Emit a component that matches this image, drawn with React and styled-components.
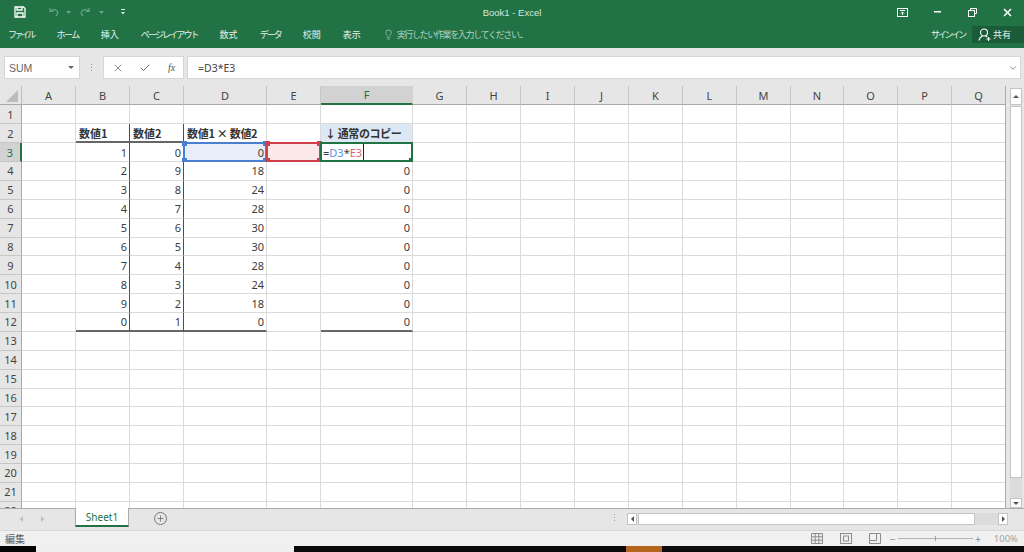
import React from 'react';
import styled, { createGlobalStyle } from 'styled-components';
import { Lightbulb, X, Check, ChevronDown, Plus } from 'lucide-react';

const GlobalStyle = createGlobalStyle`
  html, body { margin: 0; padding: 0; overflow: hidden; }
  body { font-family: "Noto Sans CJK JP", "Noto Sans", sans-serif; }
  * { box-sizing: border-box; }
`;

const Page = styled.div`
  width: 1024px;
  height: 552px;
  display: flex;
  flex-direction: column;
  background: #e6e6e6;
  overflow: hidden;
`;

const TitleBar = styled.div`
  height: 24px;
  background: #217346;
  color: #e4efe8;
  display: grid;
  grid-template-columns: 1fr auto 1fr;
  align-items: center;
`;

const Qat = styled.div`
  display: grid;
  grid-template-columns: 34px 18px 14px 19px 21px auto;
  align-items: center;
  justify-content: start;
  padding-left: 14px;
`;

const WindowTitle = styled.div`
  font-family: "Liberation Sans", sans-serif;
  font-size: 9.5px;
  color: #d6e6dc;
`;

const WindowButtons = styled.div`
  display: flex;
  justify-content: flex-end;
  align-items: center;
  gap: 26.500px;
  padding-right: 12px;
`;

const RibbonTabs = styled.div`
  height: 24px;
  background: #217346;
  display: flex;
  align-items: center;
  padding: 0 0 4px 8px;
  gap: 22px;
  color: #e8f1eb;
  font-size: 9px;
`;

const RibbonTab = styled.span`
  white-space: nowrap;
  letter-spacing: ${p => p.$tight}px;
`;

const FileTab = styled(RibbonTab)`
  margin-right: 1px;
`;

const TellMe = styled.div`
  display: flex;
  align-items: center;
  gap: 3px;
  color: #b4d0bf;
  letter-spacing: -1.35px;
  white-space: nowrap;
`;

const AccountArea = styled.div`
  margin-left: auto;
  display: flex;
  align-items: center;
  gap: 7px;
`;

const SignIn = styled.span`
  letter-spacing: -2.2px;
`;

const ShareButton = styled.div`
  width: 52px;
  height: 17px;
  padding-left: 6px;
  background: #1a5c38;
  display: flex;
  align-items: center;
  gap: 2px;
`;

const FormulaArea = styled.div`
  height: 38px;
  background: #e6e6e6;
  display: flex;
  align-items: flex-start;
  padding: 8px 3px 0 4px;
`;

const NameBox = styled.div`
  width: 76px;
  height: 23px;
  background: #fff;
  border: 1px solid #d6d6d6;
  display: flex;
  align-items: center;
  justify-content: space-between;
  padding: 0 3px 0 4px;
  font-family: "Liberation Sans", sans-serif;
  font-size: 10.5px;
  color: #666;
`;

const Caret = styled.span`
  width: 0;
  height: 0;
  border-left: 3px solid transparent;
  border-right: 3px solid transparent;
  border-top: 3px solid #666;
  margin-right: 2px;
`;

const Grip = styled.div`
  width: 23px;
  height: 22px;
  display: flex;
  flex-direction: column;
  align-items: center;
  justify-content: center;
  gap: 2px;
`;

const GripDot = styled.span`
  width: 1px;
  height: 1px;
  background: #9a9a9a;
`;

const FormulaButtons = styled.div`
  width: 81px;
  height: 23px;
  background: #fff;
  border: 1px solid #d6d6d6;
  display: grid;
  grid-template-columns: repeat(3, 27px);
  justify-items: center;
  align-items: center;
  color: #666;
`;

const FxLabel = styled.span`
  font-family: "Liberation Serif", serif;
  font-style: italic;
  font-size: 10px;
  color: #555;
`;

const FormulaInput = styled.div`
  flex: 1;
  height: 23px;
  margin-left: 3px;
  background: #fff;
  border: 1px solid #d6d6d6;
  display: flex;
  align-items: center;
  justify-content: space-between;
  padding: 0 2px 0 10px;
  font-family: "Noto Sans", sans-serif;
  font-size: 10.5px;
  color: #444;
`;

const SheetArea = styled.div`
  height: 422px;
  display: flex;
  background: #e6e6e6;
`;

const Grid = styled.div`
  width: 1006px;
  height: 422px;
  overflow: hidden;
  display: grid;
  grid-template-columns: 22px 54px 54px 54px 83px 54px 92px repeat(7, 54px) 53px 54px 54px 54px;
  grid-template-rows: 19.400px repeat(22, 18.880px);
  background: #fff;
  border-right: 1px solid #ababab;
`;

const Corner = styled.div`
  background: #e6e6e6;
  border-right: 1px solid #bdbdbd;
  border-bottom: 1px solid #a8a8a8;
  position: relative;
  &::after {
    content: '';
    position: absolute;
    right: 3px;
    bottom: 2px;
    border-left: 12px solid transparent;
    border-bottom: 12px solid #bcbcbc;
  }
`;

const ColHead = styled.div`
  background: ${p => (p.$active ? '#d2d2d2' : '#e6e6e6')};
  border-right: 1px solid ${p => (p.$active ? '#d2d2d2' : '#c6c6c6')};
  border-bottom: ${p => (p.$active ? '2px solid #217346' : '1px solid #a8a8a8')};
  display: flex;
  align-items: center;
  justify-content: center;
  font-family: "Noto Sans", sans-serif;
  font-size: 11px;
  color: ${p => (p.$active ? '#217346' : '#444')};
`;

const RowHead = styled.div`
  background: ${p => (p.$active ? '#d2d2d2' : '#e6e6e6')};
  border-right: ${p => (p.$active ? '2px solid #217346' : '1px solid #a8a8a8')};
  border-bottom: 1px solid #c6c6c6;
  display: flex;
  align-items: center;
  justify-content: center;
  font-family: "Noto Sans", sans-serif;
  font-size: 11px;
  color: ${p => (p.$active ? '#217346' : '#444')};
`;

const Cell = styled.div`
  position: relative;
  display: flex;
  align-items: center;
  justify-content: ${p => (p.$right ? 'flex-end' : 'flex-start')};
  padding: ${p => (p.$right ? '0 2px 0 0' : '0 0 0 2px')};
  background: ${p => p.$bg || '#fff'};
  border-right: 1px solid ${p => (p.$heavyRight ? '#4d4d4d' : '#dadada')};
  border-bottom: ${p => (p.$heavyBottom ? '2px solid #666' : '1px solid #dadada')};
  font-family: "Noto Sans", "Noto Sans CJK JP", sans-serif;
  font-size: 11px;
  color: #3c3c3c;
  white-space: nowrap;
`;

const BoldText = styled.span`
  font-family: "Noto Sans CJK JP", sans-serif;
  font-size: 11px;
  font-weight: 700;
  color: #333;
  margin-left: ${p => p.$indent || 0}px;
  letter-spacing: ${p => p.$tight || 0}px;
`;

const Selection = styled.div`
  position: absolute;
  top: -1px;
  left: -1px;
  right: -1px;
  bottom: -1px;
  border: 2px solid ${p => p.$color};
  pointer-events: none;
`;

const Handle = styled.span`
  position: absolute;
  width: 5px;
  height: 5px;
  background: ${p => p.$color};
  ${p => (p.$v === 'top' ? 'top: -3px;' : 'bottom: -3px;')}
  ${p => (p.$h === 'left' ? 'left: -3px;' : 'right: -3px;')}
`;

const RefText = styled.span`
  color: ${p => p.$color};
`;

const EditCaret = styled.span`
  width: 1px;
  height: 18px;
  background: #222;
  margin-left: 1px;
`;

const VScroll = styled.div`
  flex: 1;
  padding: 2px 2px 0 4px;
  display: flex;
  flex-direction: column;
`;

const ScrollButton = styled.div`
  width: ${p => p.$w}px;
  height: ${p => p.$h}px;
  background: #fff;
  border: 1px solid #c4c4c4;
  display: flex;
  align-items: center;
  justify-content: center;
  flex: none;
`;

const Arrow = styled.span`
  width: 0;
  height: 0;
  ${p => p.$dir === 'up' && 'border-left: 3px solid transparent; border-right: 3px solid transparent; border-bottom: 3px solid #555;'}
  ${p => p.$dir === 'down' && 'border-left: 3px solid transparent; border-right: 3px solid transparent; border-top: 3px solid #555;'}
  ${p => p.$dir === 'left' && 'border-top: 3px solid transparent; border-bottom: 3px solid transparent; border-right: 3px solid #555;'}
  ${p => p.$dir === 'right' && 'border-top: 3px solid transparent; border-bottom: 3px solid transparent; border-left: 3px solid #555;'}
`;

const VThumb = styled.div`
  height: 372px;
  margin-top: 1px;
  background: #fff;
  border: 1px solid #c4c4c4;
  flex: none;
`;

const VTrack = styled.div`
  flex: 1;
  background: #dcdcdc;
`;

const SheetTabs = styled.div`
  height: 22px;
  background: #e6e6e6;
  border-top: 1px solid #ababab;
  display: flex;
  align-items: flex-start;
`;

const TabNav = styled.div`
  width: 75px;
  height: 20px;
  display: flex;
  align-items: center;
  padding-left: 20px;
  gap: 18px;
`;

const NavArrow = styled.span`
  width: 0;
  height: 0;
  border-top: 3px solid transparent;
  border-bottom: 3px solid transparent;
  ${p => (p.$left ? 'border-right: 3px solid #bcbcbc;' : 'border-left: 3px solid #bcbcbc;')}
`;

const SheetTab = styled.div`
  width: 54px;
  height: 19px;
  margin-top: -1px;
  background: #fff;
  border-left: 1px solid #ababab;
  border-right: 1px solid #ababab;
  border-bottom: 2px solid #217346;
  display: flex;
  align-items: center;
  justify-content: center;
  font-family: "Noto Sans", sans-serif;
  font-size: 10px;
  color: #217346;
`;

const AddSheet = styled.div`
  width: 13px;
  height: 13px;
  margin: 3px 0 0 25px;
  border: 1px solid #777;
  border-radius: 50%;
  display: flex;
  align-items: center;
  justify-content: center;
  color: #666;
`;

const TabGrip = styled.div`
  margin: 5px 0 0 447px;
  height: 10px;
  width: 13px;
  display: flex;
  flex-direction: column;
  gap: 2px;
`;

const HScroll = styled.div`
  width: 381px;
  height: 12px;
  margin-top: 4px;
  display: flex;
`;

const HThumb = styled.div`
  width: 337px;
  margin-left: 1px;
  background: #fff;
  border: 1px solid #c4c4c4;
`;

const HTrack = styled.div`
  flex: 1;
  background: #dcdcdc;
`;

const StatusBar = styled.div`
  height: 16px;
  background: #f0f0f0;
  border-top: 1px solid #d8d8d8;
  display: flex;
  align-items: center;
  padding: 0 6px 1px 5px;
  font-size: 10px;
  color: #5c5c5c;
`;

const ViewIcons = styled.div`
  margin-left: auto;
  display: flex;
  align-items: center;
  gap: 17px;
`;

const Zoom = styled.div`
  margin-left: 9px;
  display: flex;
  align-items: center;
  color: #8a8a8a;
`;

const ZoomTrack = styled.div`
  width: 75px;
  height: 1px;
  margin: 0 2px 0 3px;
  background: #b4b4b4;
  position: relative;
  &::after {
    content: '';
    position: absolute;
    left: 37px;
    top: -2px;
    width: 1px;
    height: 5px;
    background: #a0a0a0;
  }
`;

const ZoomLabel = styled.span`
  margin-left: 13px;
  font-family: "Noto Sans", sans-serif;
  font-size: 9.500px;
  color: #a5a5a5;
`;

const Desktop = styled.div`
  flex: 1;
  display: flex;
  background: #0c0c0e;
`;

const DesktopPiece = styled.div`
  width: ${p => p.$w}px;
  background: ${p => p.$bg};
`;

const SaveIcon = () => (
  <svg width="12" height="12" viewBox="0 0 12 12" fill="none" stroke="#fff" strokeWidth="1.300">
    <path d="M1 1h8.500L11 2.500V11H1z" />
    <path d="M3 1v3h5V1M3 11V7h6v4" />
  </svg>
);

const UndoIcon = ({ flip }) => (
  <svg width="11" height="10" viewBox="0 0 11 10" fill="none" stroke="#6ea586" strokeWidth="1.200" style={flip ? { transform: 'scaleX(-1)' } : undefined}>
    <path d="M2 1v3.500h3.500M2 4.500C3.500 2.500 7 1.800 9 4c1 1.500.6 3.500-1 5" />
  </svg>
);

const SmallDrop = ({ color = '#6ea586' }) => (
  <svg width="5" height="3" viewBox="0 0 5 3"><path d="M0 0h5L2.500 3z" fill={color} /></svg>
);

const QatMore = () => (
  <svg width="6" height="6" viewBox="0 0 6 6" fill="#dfe9e3">
    <rect x="1" y="0" width="4" height="1" />
    <path d="M1 3h4L3 5.500z" />
  </svg>
);

const RestoreRibbonIcon = () => (
  <svg width="11" height="9" viewBox="0 0 11 9" fill="none" stroke="#fff">
    <rect x="0.500" y="0.500" width="10" height="8" />
    <path d="M3 2.500h5" />
    <path d="M5.500 7V4M4 5.500L5.500 4 7 5.500" />
  </svg>
);

const MinimizeIcon = () => (
  <svg width="7" height="2" viewBox="0 0 7 2"><rect width="7" height="1.500" fill="#fff" /></svg>
);

const RestoreIcon = () => (
  <svg width="9" height="9" viewBox="0 0 9 9" fill="none" stroke="#fff">
    <path d="M2.500 2V.5h6v5H7" />
    <rect x="0.500" y="2.500" width="6" height="6" />
  </svg>
);

const CloseIcon = () => (
  <svg width="9" height="9" viewBox="0 0 9 9" stroke="#fff" strokeWidth="1.500"><path d="M1 1l7 7M8 1L1 8" /></svg>
);

const ShareIcon = () => (
  <svg width="13" height="13" viewBox="0 0 13 13" fill="none" stroke="#fff" strokeWidth="1.100">
    <circle cx="6" cy="4.500" r="3.500" />
    <path d="M1 12.500c.5-2.500 2-4 3.500-4.500M7.500 8c.8.300 1.300.6 1.800 1.100" />
    <path d="M8.500 11h4M10.500 9v4" />
  </svg>
);

const NormalViewIcon = () => (
  <svg width="12" height="11" viewBox="0 0 12 11" fill="none" stroke="#8c8c8c">
    <path d="M.5.500h11v10H.5zM4.200.500v10M7.800.500v10M.5 3.800h11M.5 7.200h11" />
  </svg>
);

const PageViewIcon = () => (
  <svg width="12" height="11" viewBox="0 0 12 11" fill="none" stroke="#8c8c8c">
    <rect x="0.500" y="0.500" width="11" height="10" />
    <rect x="3.500" y="3" width="5" height="5" />
  </svg>
);

const BreakViewIcon = () => (
  <svg width="12" height="11" viewBox="0 0 12 11" fill="none" stroke="#8c8c8c">
    <path d="M.5.500h11v10H.5zM.5 7.500h7V.5" />
  </svg>
);

const cols = ['A', 'B', 'C', 'D', 'E', 'F', 'G', 'H', 'I', 'J', 'K', 'L', 'M', 'N', 'O', 'P', 'Q'];
const valuesB = [1, 2, 3, 4, 5, 6, 7, 8, 9, 0];
const valuesC = [0, 9, 8, 7, 6, 5, 4, 3, 2, 1];
const valuesD = [0, 18, 24, 28, 30, 30, 28, 24, 18, 0];

const corners = [['top', 'left'], ['top', 'right'], ['bottom', 'left'], ['bottom', 'right']];

const RangeMark = ({ color }) => (
  <Selection $color={color}>
    {corners.map(([v, h]) => (
      <Handle key={v + h} $v={v} $h={h} $color={color} />
    ))}
  </Selection>
);

const renderCell = (col, row) => {
  const key = col + row;
  const idx = row - 3;
  const inData = row >= 3 && row <= 12;
  const lastRow = row === 12;

  if (col === 'B' || col === 'C') {
    const data = col === 'B' ? valuesB : valuesC;
    if (row === 2) {
      return (
        <Cell key={key} $heavyRight $heavyBottom>
          <BoldText $indent={1}>{col === 'B' ? '数値1' : '数値2'}</BoldText>
        </Cell>
      );
    }
    if (inData) {
      return (
        <Cell key={key} $right $heavyRight $heavyBottom={lastRow}>
          {data[idx]}
        </Cell>
      );
    }
  }

  if (col === 'D') {
    if (row === 2) {
      return (
        <Cell key={key}>
          <BoldText $indent={1} $tight={-0.3}>数値1 × 数値2</BoldText>
        </Cell>
      );
    }
    if (row === 3) {
      return (
        <Cell key={key} $right $bg="#e8eef8">
          {valuesD[idx]}
          <RangeMark color="#4a7fd0" />
        </Cell>
      );
    }
    if (inData) {
      return (
        <Cell key={key} $right $heavyBottom={lastRow}>
          {valuesD[idx]}
        </Cell>
      );
    }
  }

  if (col === 'E' && row === 3) {
    return (
      <Cell key={key} $bg="#fbe8e8">
        <RangeMark color="#d0404a" />
      </Cell>
    );
  }

  if (col === 'F') {
    if (row === 2) {
      return (
        <Cell key={key} $bg="#dce9f5">
          <BoldText $indent={2} $tight={-0.4}>↓ 通常のコピー</BoldText>
        </Cell>
      );
    }
    if (row === 3) {
      return (
        <Cell key={key}>
          =<RefText $color="#5b8fdc">D3</RefText>*<RefText $color="#e0656d">E3</RefText>
          <EditCaret />
          <Selection $color="#217346">
            <Handle $v="bottom" $h="right" $color="#217346" />
          </Selection>
        </Cell>
      );
    }
    if (inData) {
      return (
        <Cell key={key} $right $heavyBottom={lastRow}>
          0
        </Cell>
      );
    }
  }

  return <Cell key={key} />;
};

const App = () => {
  const rows = Array.from({ length: 22 }, (_, i) => i + 1);

  return (
    <Page>
      <GlobalStyle />
      <TitleBar>
        <Qat>
          <SaveIcon />
          <UndoIcon />
          <SmallDrop />
          <UndoIcon flip />
          <SmallDrop />
          <QatMore />
        </Qat>
        <WindowTitle>Book1 - Excel</WindowTitle>
        <WindowButtons>
          <RestoreRibbonIcon />
          <MinimizeIcon />
          <RestoreIcon />
          <CloseIcon />
        </WindowButtons>
      </TitleBar>

      <RibbonTabs>
        <FileTab $tight={-2.6}>ファイル</FileTab>
        <RibbonTab $tight={-1.5}>ホーム</RibbonTab>
        <RibbonTab $tight={0}>挿入</RibbonTab>
        <RibbonTab $tight={-1.9}>ページ レイアウト</RibbonTab>
        <RibbonTab $tight={0}>数式</RibbonTab>
        <RibbonTab $tight={-2}>データ</RibbonTab>
        <RibbonTab $tight={0}>校閲</RibbonTab>
        <RibbonTab $tight={0}>表示</RibbonTab>
        <TellMe>
          <Lightbulb size={11} strokeWidth={1.3} color="#cfe0d6" />
          実行したい作業を入力してください...
        </TellMe>
        <AccountArea>
          <SignIn>サインイン</SignIn>
          <ShareButton>
            <ShareIcon />
            共有
          </ShareButton>
        </AccountArea>
      </RibbonTabs>

      <FormulaArea>
        <NameBox>
          SUM
          <Caret />
        </NameBox>
        <Grip>
          <GripDot />
          <GripDot />
          <GripDot />
        </Grip>
        <FormulaButtons>
          <X size={12} strokeWidth={1.5} />
          <Check size={12} strokeWidth={2} />
          <FxLabel>fx</FxLabel>
        </FormulaButtons>
        <FormulaInput>
          =D3*E3
          <ChevronDown size={10} strokeWidth={2} color="#777" />
        </FormulaInput>
      </FormulaArea>

      <SheetArea>
        <Grid>
          <Corner />
          {cols.map(c => (
            <ColHead key={c} $active={c === 'F'}>{c}</ColHead>
          ))}
          {rows.map(r => (
            <React.Fragment key={r}>
              <RowHead $active={r === 3}>{r}</RowHead>
              {cols.map(c => renderCell(c, r))}
            </React.Fragment>
          ))}
        </Grid>
        <VScroll>
          <ScrollButton $w={12} $h={17}><Arrow $dir="up" /></ScrollButton>
          <VThumb />
          <VTrack />
          <ScrollButton $w={12} $h={10}><Arrow $dir="down" /></ScrollButton>
        </VScroll>
      </SheetArea>

      <SheetTabs>
        <TabNav>
          <NavArrow $left />
          <NavArrow />
        </TabNav>
        <SheetTab>Sheet1</SheetTab>
        <AddSheet><Plus size={9} strokeWidth={2} /></AddSheet>
        <TabGrip>
          <GripDot />
          <GripDot />
          <GripDot />
        </TabGrip>
        <HScroll>
          <ScrollButton $w={10} $h={12}><Arrow $dir="left" /></ScrollButton>
          <HThumb />
          <HTrack />
          <ScrollButton $w={10} $h={12}><Arrow $dir="right" /></ScrollButton>
        </HScroll>
      </SheetTabs>

      <StatusBar>
        編集
        <ViewIcons>
          <NormalViewIcon />
          <PageViewIcon />
          <BreakViewIcon />
        </ViewIcons>
        <Zoom>
          <span>−</span>
          <ZoomTrack />
          <span>+</span>
          <ZoomLabel>100%</ZoomLabel>
        </Zoom>
      </StatusBar>

      <Desktop>
        <DesktopPiece $w={36} $bg="#050505" />
        <DesktopPiece $w={258} $bg="#efefef" />
        <DesktopPiece $w={332} $bg="#0a0a0c" />
        <DesktopPiece $w={36} $bg="#b5651d" />
      </Desktop>
    </Page>
  );
};

export default App;
